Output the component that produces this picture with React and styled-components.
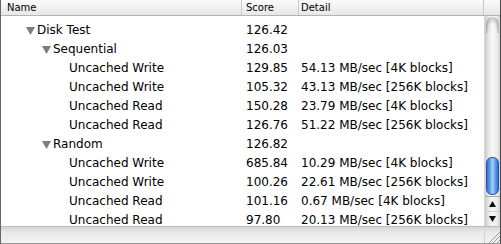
import styled, { createGlobalStyle } from "styled-components";

const rows = [
  { level: 0, group: true, name: "Disk Test", score: "126.42", detail: "" },
  { level: 1, group: true, name: "Sequential", score: "126.03", detail: "" },
  { level: 2, name: "Uncached Write", score: "129.85", detail: "54.13 MB/sec [4K blocks]" },
  { level: 2, name: "Uncached Write", score: "105.32", detail: "43.13 MB/sec [256K blocks]" },
  { level: 2, name: "Uncached Read", score: "150.28", detail: "23.79 MB/sec [4K blocks]" },
  { level: 2, name: "Uncached Read", score: "126.76", detail: "51.22 MB/sec [256K blocks]" },
  { level: 1, group: true, name: "Random", score: "126.82", detail: "" },
  { level: 2, name: "Uncached Write", score: "685.84", detail: "10.29 MB/sec [4K blocks]" },
  { level: 2, name: "Uncached Write", score: "100.26", detail: "22.61 MB/sec [256K blocks]" },
  { level: 2, name: "Uncached Read", score: "101.16", detail: "0.67 MB/sec [4K blocks]" },
  { level: 2, name: "Uncached Read", score: "97.80", detail: "20.13 MB/sec [256K blocks]" },
];

const GlobalStyle = createGlobalStyle`
  html, body {
    margin: 0;
    padding: 0;
    background: #ffffff;
  }
`;

const Window = styled.div`
  width: 501px;
  height: 244px;
  box-sizing: border-box;
  display: flex;
  flex-direction: column;
  border-left: 1px solid #666;
  border-right: 1px solid #4a4a4a;
  font-family: "DejaVu Sans", "Liberation Sans", sans-serif;
  color: #000;
  overflow: hidden;
`;

const HeaderRow = styled.div`
  display: grid;
  grid-template-columns: 241px 57px 185px 16px;
  height: 16px;
  box-sizing: border-box;
  border-bottom: 1px solid #b4b4b4;
  background: linear-gradient(to bottom, #fbfbfb 0%, #f1f1f1 50%, #e7e7e7 100%);
`;

const HeaderCell = styled.div`
  box-sizing: border-box;
  padding-left: ${(p) => p.$pad}px;
  border-right: ${(p) => (p.$last ? "none" : "1px solid #c9c9c9")};
  font-size: 10px;
  line-height: 15px;
  white-space: nowrap;
`;

const Body = styled.div`
  flex: 1;
  display: flex;
  min-height: 0;
`;

const List = styled.div`
  flex: 1;
  padding-top: 5px;
  overflow: hidden;
  background: #fff;
`;

const Row = styled.div`
  display: grid;
  grid-template-columns: 241px 57px 1fr;
  height: 19px;
  font-size: 12px;
  line-height: 19px;
  white-space: nowrap;
`;

const NameCell = styled.div`
  display: flex;
  align-items: center;
  padding-left: ${(p) => 25 + p.$level * 16}px;
`;

const Toggle = styled.span`
  width: 11px;
  flex: none;
  display: flex;
  align-items: center;
`;

const ValueCell = styled.div`
  padding-left: ${(p) => p.$pad}px;
`;

const Scroller = styled.div`
  width: 16px;
  display: flex;
  flex-direction: column;
  border-left: 1px solid #d6d6d6;
  box-sizing: border-box;
  background: linear-gradient(to right, #c9c9c9 0%, #e4e4e4 20%, #f8f8f8 50%, #ececec 80%, #d2d2d2 100%);
`;

const Track = styled.div`
  flex: 1;
  position: relative;
  display: flex;
  flex-direction: column;
  justify-content: flex-end;
  padding: 0 1px 1px 1px;

  &::before {
    content: "";
    position: absolute;
    top: 1px;
    left: 1px;
    right: 1px;
    height: 16px;
    border-radius: 7px 7px 0 0;
    background: radial-gradient(ellipse at 50% 100%, rgba(255, 255, 255, 0) 40%, rgba(120, 120, 120, 0.45) 75%, rgba(150, 150, 150, 0.1) 100%);
  }
`;

const Thumb = styled.div`
  height: 38px;
  border-radius: 6px;
  border: 1px solid #2452a8;
  box-sizing: border-box;
  background: linear-gradient(to right, #2f6fd4 0%, #6ca6ee 30%, #a7cdf8 50%, #6ca6ee 70%, #2f6fd4 100%);
`;

const ArrowButton = styled.div`
  height: 14px;
  display: flex;
  align-items: center;
  justify-content: center;
  border-top: 1px solid ${(p) => (p.$strong ? "#a8a8a8" : "#d0d0d0")};
`;

const Footer = styled.div`
  height: 18px;
  display: flex;
  box-sizing: border-box;
  border-top: 1px solid #bdbdbd;
  border-bottom: 1px solid #9a9a9a;
  background: linear-gradient(to bottom, #d6d6d6 0%, #e9e9e9 35%, #f3f3f3 100%);
`;

const FooterFill = styled.div`
  flex: 1;
`;

const Grip = styled.div`
  width: 16px;
  display: flex;
  align-items: flex-end;
  justify-content: flex-end;
  border-left: 1px solid #d4d4d4;
  box-sizing: border-box;
`;

const Triangle = () => (
  <svg width="9" height="8" viewBox="0 0 9 8">
    <polygon points="0,0 9,0 4.5,8" fill="#7d7d7d" />
  </svg>
);

const Arrow = ({ up }) => (
  <svg width="7" height="6" viewBox="0 0 7 6">
    <polygon points={up ? "3.5,0 7,6 0,6" : "0,0 7,0 3.5,6"} fill="#111" />
  </svg>
);

export default function App() {
  return (
    <>
      <GlobalStyle />
      <Window>
        <HeaderRow>
          <HeaderCell $pad={6}>Name</HeaderCell>
          <HeaderCell $pad={4}>Score</HeaderCell>
          <HeaderCell $pad={2}>Detail</HeaderCell>
          <HeaderCell $last />
        </HeaderRow>
        <Body>
          <List>
            {rows.map((r, i) => (
              <Row key={i}>
                <NameCell $level={r.level}>
                  <Toggle>{r.group && <Triangle />}</Toggle>
                  {r.name}
                </NameCell>
                <ValueCell $pad={4}>{r.score}</ValueCell>
                <ValueCell $pad={2}>{r.detail}</ValueCell>
              </Row>
            ))}
          </List>
          <Scroller>
            <Track>
              <Thumb />
            </Track>
            <ArrowButton $strong>
              <Arrow up />
            </ArrowButton>
            <ArrowButton>
              <Arrow />
            </ArrowButton>
          </Scroller>
        </Body>
        <Footer>
          <FooterFill />
          <Grip>
            <svg width="14" height="14" viewBox="0 0 14 14">
              <line x1="3" y1="14" x2="14" y2="3" stroke="#9a9a9a" strokeWidth="1" />
              <line x1="7" y1="14" x2="14" y2="7" stroke="#9a9a9a" strokeWidth="1" />
              <line x1="11" y1="14" x2="14" y2="11" stroke="#9a9a9a" strokeWidth="1" />
            </svg>
          </Grip>
        </Footer>
      </Window>
    </>
  );
}
